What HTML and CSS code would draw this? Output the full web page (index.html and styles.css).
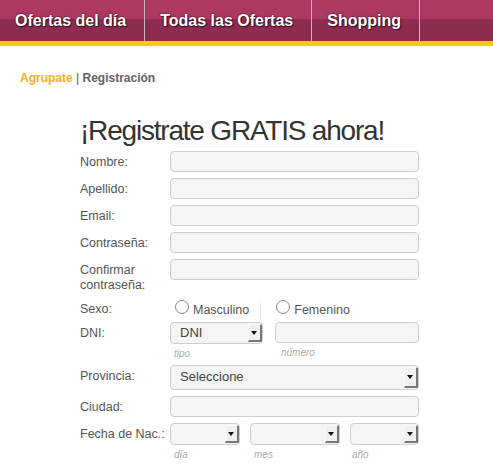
FILE: index.html
```html
<!DOCTYPE html>
<html lang="es">
<head>
<meta charset="utf-8">
<title>Registración</title>
<link rel="stylesheet" href="styles.css">
</head>
<body>
<nav class="nav">
  <a class="nav-item" href="#">Ofertas del día</a>
  <a class="nav-item" href="#">Todas las Ofertas</a>
  <a class="nav-item" href="#">Shopping</a>
</nav>

<div class="crumbs"><a class="crumb-link" href="#">Agrupate</a> <span class="crumb-sep">|</span> <span class="crumb-current">Registración</span></div>

<main class="form-wrap">
  <h1 class="title">¡Registrate GRATIS ahora!</h1>

  <div class="row"><label class="lbl">Nombre:</label><div class="field"><span class="input"></span></div></div>
  <div class="row"><label class="lbl">Apellido:</label><div class="field"><span class="input"></span></div></div>
  <div class="row"><label class="lbl">Email:</label><div class="field"><span class="input"></span></div></div>
  <div class="row"><label class="lbl">Contraseña:</label><div class="field"><span class="input"></span></div></div>
  <div class="row"><label class="lbl">Confirmar contraseña:</label><div class="field"><span class="input"></span></div></div>

  <div class="row row-sexo"><label class="lbl">Sexo:</label>
    <div class="field radios">
      <span class="radio-opt"><span class="radio"></span>Masculino</span>
      <span class="dots"></span>
      <span class="radio-opt"><span class="radio"></span>Femenino</span>
    </div>
  </div>

  <div class="row row-tight"><label class="lbl">DNI:</label>
    <div class="field split">
      <div class="col col-dni">
        <span class="select"><span class="sel-text">DNI</span><span class="arrow"></span></span>
        <span class="hint">tipo</span>
      </div>
      <div class="col col-num">
        <span class="input"></span>
        <span class="hint hint-num">número</span>
      </div>
    </div>
  </div>

  <div class="row"><label class="lbl">Provincia:</label><div class="field"><span class="select select-tall"><span class="sel-text">Seleccione</span><span class="arrow"></span></span></div></div>
  <div class="row"><label class="lbl">Ciudad:</label><div class="field"><span class="input"></span></div></div>

  <div class="row"><label class="lbl">Fecha de Nac.:</label>
    <div class="field split">
      <div class="col col-dia"><span class="select"><span class="sel-text"></span><span class="arrow"></span></span><span class="hint">día</span></div>
      <div class="col col-mes"><span class="select"><span class="sel-text"></span><span class="arrow"></span></span><span class="hint">mes</span></div>
      <div class="col col-anio"><span class="select"><span class="sel-text"></span><span class="arrow"></span></span><span class="hint hint-anio">año</span></div>
    </div>
  </div>
</main>
</body>
</html>
```

FILE: styles.css
```css
html, body {
  margin: 0;
  padding: 0;
  background: #fff;
  font-family: "Liberation Sans", Arial, sans-serif;
}

.nav {
  display: flex;
  height: 41px;
  background: linear-gradient(to bottom, #ad3862 0, #ad3862 19px, #8e2b51 19px, #8e2b51 100%);
  border-bottom: 5px solid #ffcc00;
}
.nav-item {
  display: block;
  padding: 0 18px 0 15px;
  line-height: 41px;
  font-size: 16px;
  font-weight: bold;
  color: #fff;
  text-decoration: none;
  text-shadow: 0 0 2px rgba(40, 0, 20, 0.9), 1px 1px 1px rgba(0, 0, 0, 0.6);
  border-right: 1px solid #cbb2bc;
}

.crumbs {
  margin: 25px 0 0 20px;
  font-size: 12px;
  line-height: 15px;
  font-weight: bold;
  color: #666;
}
.crumb-link { color: #f9ae1c; text-decoration: none; }
.crumb-sep { font-weight: normal; color: #555; }
.crumb-current { color: #5f6068; }

.form-wrap {
  margin: 29px 0 0 80px;
  width: 339px;
}
.title {
  margin: 0 0 4px 0;
  font-size: 28px;
  line-height: 32px;
  font-weight: normal;
  letter-spacing: -1.2px;
  color: #333;
}

.row {
  display: flex;
  margin-bottom: 6px;
}
.lbl {
  width: 90px;
  flex: none;
  padding-top: 4px;
  font-size: 12.5px;
  line-height: 15px;
  color: #555;
}
.field { flex: 1; }

.input {
  display: block;
  box-sizing: border-box;
  height: 21px;
  border: 1px solid #cfcfcf;
  border-radius: 4px;
  background: #f5f5f5;
}

.row-sexo { margin-bottom: 5px; }
.row-sexo .lbl { padding-top: 3px; }
.radios {
  display: flex;
  align-items: center;
  height: 18px;
  padding-left: 5px;
  font-size: 12.5px;
  color: #555;
}
.radio-opt {
  display: flex;
  align-items: center;
  position: relative;
  top: 2px;
}
.radio {
  display: inline-block;
  box-sizing: border-box;
  width: 14px;
  height: 14px;
  margin-right: 4px;
  border: 1px solid #8a8a8a;
  border-radius: 50%;
  background: radial-gradient(circle at 50% 40%, #fff 0, #fff 50%, #e8e8e8 100%);
  position: relative;
  top: -3px;
}
.dots {
  width: 0;
  height: 17px;
  margin: 0 15px 0 11px;
  border-left: 1px dotted #cccccc;
  position: relative;
  top: 2px;
}

.row-tight { margin-bottom: 0; }
.split {
  display: flex;
}
.col { display: flex; flex-direction: column; }
.col-dni { width: 93px; margin-right: 12px; }
.col-num { flex: 1; }
.col-dia { width: 70px; margin-right: 10px; }
.col-mes { width: 90px; margin-right: 10px; }
.col-anio { flex: 1; }

.select {
  display: flex;
  align-items: stretch;
  box-sizing: border-box;
  height: 22px;
  border: 1px solid #cfcfcf;
  border-radius: 4px;
  background: #f5f5f5;
  overflow: hidden;
}
.select-tall { height: 25px; }
.sel-text {
  flex: 1;
  padding-left: 9px;
  font-size: 13px;
  line-height: 20px;
  color: #444;
}
.select-tall .sel-text { line-height: 22px; }
.arrow {
  flex: none;
  box-sizing: border-box;
  width: 14px;
  margin: 1px 0 1px 0;
  background: #f0f0f0;
  border-top: 1px solid #fafafa;
  border-left: 1px solid #fafafa;
  border-right: 2px solid #777;
  border-bottom: 2px solid #777;
  position: relative;
}
.arrow::after {
  content: "";
  position: absolute;
  left: 2px;
  top: 50%;
  margin-top: -2px;
  border-left: 3px solid transparent;
  border-right: 3px solid transparent;
  border-top: 4px solid #111;
}

.hint {
  display: block;
  padding: 4px 0 0 4px;
  height: 17px;
  font-size: 10px;
  line-height: 12px;
  font-style: italic;
  color: #aaa;
}
.hint-num { padding-left: 6px; }
.hint-anio { padding-left: 2px; }
```
